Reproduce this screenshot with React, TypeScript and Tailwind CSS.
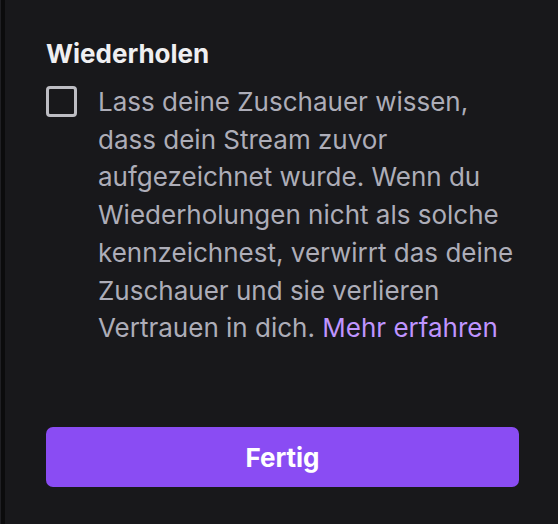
import React from "react";

export default function App() {
  return (
    <div
      className="w-[558px] h-[524px] flex bg-[#18181b] overflow-hidden"
      style={{ fontFamily: "Inter, 'Noto Sans', sans-serif" }}
    >
      <div className="w-px bg-[#1f1f23]" />
      <div className="w-[4px] bg-[#0b0b0c]" />
      <div className="flex-1 flex flex-col pl-[41px] pr-[39px] pt-[38px]">
        <h2 className="text-[26px] leading-[32px] font-bold text-[#efeff1]">Wiederholen</h2>
        <div className="flex mt-[13px]">
          <div className="w-[31px] h-[31px] mt-[3px] shrink-0 rounded-[4px] border-[3px] border-[#bdbdc3]" />
          <p className="ml-[21px] text-[26px] leading-[37.7px] text-[#adadb8]">
            Lass deine Zuschauer wissen, dass dein Stream zuvor aufgezeichnet wurde. Wenn du
            Wiederholungen nicht als solche kennzeichnest, verwirrt das deine Zuschauer und sie
            verlieren Vertrauen in dich. <span className="text-[#bf94ff]">Mehr erfahren</span>
          </p>
        </div>
        <button className="mt-auto mb-[37px] h-[60px] w-full rounded-[7px] bg-[#8a4cf3] text-white text-[26px] font-bold">
          Fertig
        </button>
      </div>
    </div>
  );
}
